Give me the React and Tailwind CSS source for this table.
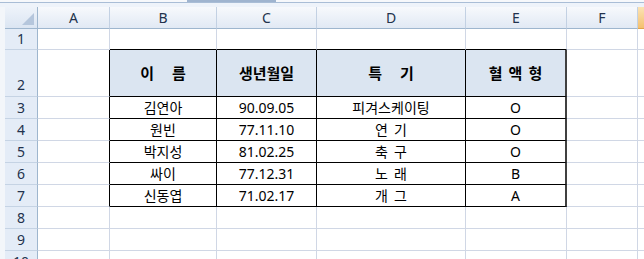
import React from 'react';

const FONT = { fontFamily: "'Noto Sans', 'Noto Sans CJK KR', sans-serif" };

const data = [
  ['김연아', '90.09.05', ['피겨스케이팅'], 'O'],
  ['원빈', '77.11.10', ['연', '기'], 'O'],
  ['박지성', '81.02.25', ['축', '구'], 'O'],
  ['싸이', '77.12.31', ['노', '래'], 'B'],
  ['신동엽', '71.02.17', ['개', '그'], 'A'],
];

const rowHeights = ['h-[21px]', 'h-[47px]', 'h-[22px]', 'h-[22px]', 'h-[22px]', 'h-[22px]', 'h-[22px]', 'h-[22px]', 'h-[22px]', 'h-[22px]'];

function Corner() {
  return (
    <div className="relative h-full border-r border-b border-[#9eb6ce] bg-gradient-to-b from-[#eef3fa] to-[#dbe5f2]">
      <svg className="absolute right-[3px] bottom-[3px]" width="12" height="12" viewBox="0 0 12 12">
        <polygon points="12,0 12,12 0,12" fill="#b5c6dc" />
      </svg>
    </div>
  );
}

function ColHead({ label }) {
  return (
    <div className="flex h-full items-center justify-center border-r border-b border-r-[#c3d1e3] border-b-[#9eb6ce] bg-gradient-to-b from-[#f7f9fc] to-[#e1e9f4] text-[14px] text-[#22324d]">
      {label}
    </div>
  );
}

function RowHead({ n, tall }) {
  return (
    <div
      className={
        tall
          ? 'flex h-full items-end justify-center border-r border-b border-r-[#9eb6ce] border-b-[#c5d3e4] bg-[#e4ecf7] pb-[4px] text-[14px] text-[#22324d]'
          : 'flex h-full items-center justify-center border-r border-b border-r-[#9eb6ce] border-b-[#c5d3e4] bg-[#e4ecf7] text-[14px] text-[#22324d]'
      }
    >
      {n}
    </div>
  );
}

function Empty({ black }) {
  return (
    <div
      className={
        black === 'r'
          ? 'h-full border-r border-b border-r-black border-b-[#d0d7e5] bg-white'
          : black === 'b'
          ? 'h-full border-r border-b border-r-[#d0d7e5] border-b-black bg-white'
          : 'h-full border-r border-b border-[#d0d7e5] bg-white'
      }
    />
  );
}

function Strip() {
  return <div className="h-full bg-[#f3f6fa]" />;
}

function GCell() {
  return <div className="h-full border-b border-[#d0d7e5] bg-white" />;
}

function HeadCell({ parts, gap, last }) {
  return (
    <div
      className={
        last
          ? 'flex h-full items-center justify-center border-r-2 border-b border-r-[#404040] border-b-black bg-[#dbe5f1] text-[15px] font-bold text-black'
          : 'flex h-full items-center justify-center border-r border-b border-black bg-[#dbe5f1] text-[15px] font-bold text-black'
      }
    >
      <div className={gap}>
        {parts.map((p, i) => (
          <span key={i}>{p}</span>
        ))}
      </div>
    </div>
  );
}

function BodyCell({ parts, last }) {
  return (
    <div
      className={
        last
          ? 'flex h-full items-center justify-center border-r-2 border-b border-r-[#404040] border-b-black bg-white text-[14px] text-black'
          : 'flex h-full items-center justify-center border-r border-b border-black bg-white text-[14px] text-black'
      }
    >
      <div className="flex gap-[6px]">
        {parts.map((p, i) => (
          <span key={i}>{p}</span>
        ))}
      </div>
    </div>
  );
}

function Row({ h, children }) {
  return (
    <div className={'grid shrink-0 grid-cols-[5px_33px_72px_107px_100px_149px_101px_71px_6px] ' + h}>{children}</div>
  );
}

export default function App() {
  return (
    <div className="flex h-[259px] w-[644px] flex-col overflow-hidden bg-white leading-none" style={FONT}>
      {/* top strip */}
      <div className="flex h-[7px] shrink-0 flex-col bg-[#eef3fa]">
        <div className="flex h-[2px] bg-[#f6f8fb]">
          <div className="w-[187px]" />
          <div className="w-[89px] bg-[#9fb4cf]" />
        </div>
        <div className="h-[1px] bg-[#a9bdd6]" />
      </div>

      {/* column header */}
      <Row h="h-[22px]">
        <Strip />
        <Corner />
        {['A', 'B', 'C', 'D', 'E', 'F'].map((l) => (
          <ColHead key={l} label={l} />
        ))}
        <div className="h-full border-b border-[#e3a24b] bg-gradient-to-b from-[#fbe3b4] to-[#f4c06e]" />
      </Row>

      {/* row 1 */}
      <Row h={rowHeights[0]}>
        <Strip />
        <RowHead n="1" />
        <Empty />
        <Empty black="b" />
        <Empty black="b" />
        <Empty black="b" />
        <Empty black="b" />
        <Empty />
        <GCell />
      </Row>

      {/* row 2 header */}
      <Row h={rowHeights[1]}>
        <Strip />
        <RowHead n="2" tall />
        <Empty black="r" />
        <HeadCell parts={['이', '름']} gap="flex gap-[18px]" />
        <HeadCell parts={['생년월일']} gap="flex" />
        <HeadCell parts={['특', '기']} gap="flex gap-[18px]" />
        <HeadCell parts={['혈', '액', '형']} gap="flex gap-[6px]" last />
        <Empty />
        <GCell />
      </Row>

      {data.map((d, i) => (
        <Row key={i} h={rowHeights[2 + i]}>
          <Strip />
          <RowHead n={String(3 + i)} />
          <Empty black="r" />
          <BodyCell parts={[d[0]]} />
          <BodyCell parts={[d[1]]} />
          <BodyCell parts={d[2]} />
          <BodyCell parts={[d[3]]} last />
          <Empty />
          <GCell />
        </Row>
      ))}

      {['8', '9', '10'].map((n, i) => (
        <Row key={n} h={rowHeights[7 + i]}>
          <Strip />
          <RowHead n={n} />
          <Empty />
          <Empty />
          <Empty />
          <Empty />
          <Empty />
          <Empty />
          <GCell />
        </Row>
      ))}
    </div>
  );
}
